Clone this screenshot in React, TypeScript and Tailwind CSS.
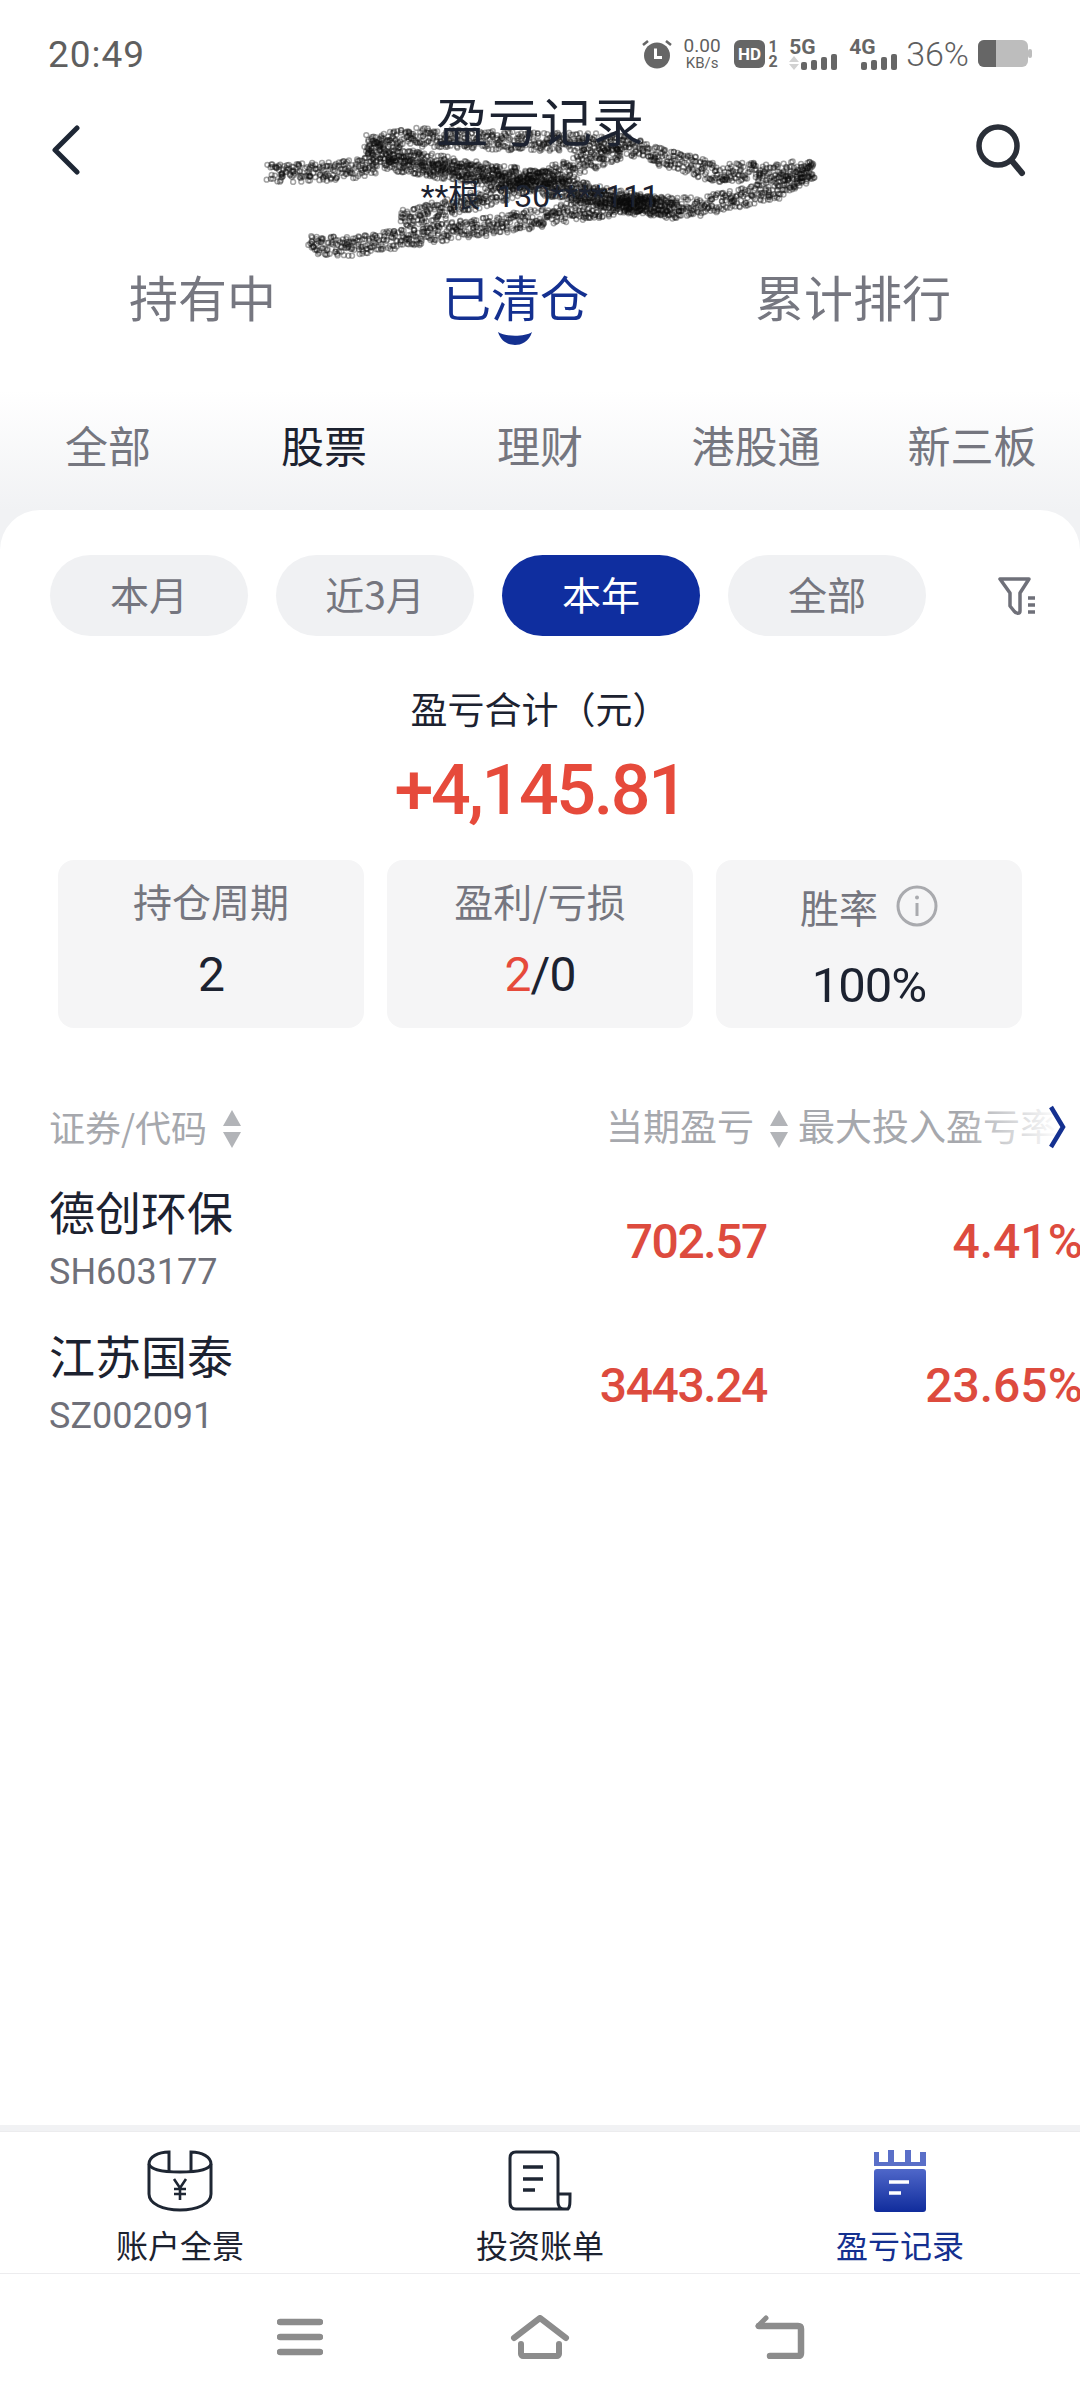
import React from "react";

const CJK = "font-['Noto_Sans_CJK_SC','Noto_Sans',sans-serif]";
const NUM = "font-['Roboto','Noto_Sans_CJK_SC',sans-serif]";

function buildScribble() {
  const strokes: number[][][] = [
    [[75, 250], [250, 245], [400, 215], [520, 240], [700, 270], [850, 300], [1000, 340], [1150, 360]],
    [[330, 165], [450, 140], [650, 150], [800, 155], [1000, 160], [1100, 200], [1250, 250], [1500, 240], [1400, 300], [1200, 350], [1000, 345]],
    [[330, 175], [440, 205], [600, 240], [800, 270], [950, 320], [1100, 350]],
    [[420, 390], [560, 350], [700, 300], [850, 240], [1000, 180]],
    [[180, 465], [300, 470], [500, 430], [700, 400], [900, 360], [1050, 340]],
  ];
  let seed = 12345;
  const rnd = () => {
    seed = (seed * 16807) % 2147483647;
    return seed / 2147483647;
  };
  const dots: { x: number; y: number }[] = [];
  for (const s of strokes) {
    for (let i = 0; i < s.length - 1; i++) {
      const x0 = 240 + s[i][0] / 2.613;
      const y0 = 90 + s[i][1] / 3;
      const x1 = 240 + s[i + 1][0] / 2.613;
      const y1 = 90 + s[i + 1][1] / 3;
      const len = Math.hypot(x1 - x0, y1 - y0);
      const n = Math.ceil(len / 0.55);
      for (let k = 0; k < n; k++) {
        const t = k / n;
        dots.push({
          x: x0 + (x1 - x0) * t + (rnd() - 0.5) * 5,
          y: y0 + (y1 - y0) * t + (rnd() - 0.5) * 19,
        });
      }
    }
  }
  return dots;
}
const scribble = buildScribble();

function Sort({ className = "" }: { className?: string }) {
  return (
    <svg width="22" height="38" viewBox="0 0 22 38" className={className}>
      <path d="M11 0 L20 16 H2 Z" fill="#b2b4b8" />
      <path d="M11 38 L20 22 H2 Z" fill="#b2b4b8" />
    </svg>
  );
}

function Bars() {
  return (
    <svg width="36" height="16" viewBox="0 0 36 16">
      <rect x="0" y="8" width="6" height="8" rx="2" fill="#666" />
      <rect x="10" y="6" width="6" height="10" rx="2" fill="#666" />
      <rect x="20" y="3" width="6" height="13" rx="2" fill="#666" />
      <rect x="30" y="0" width="6" height="16" rx="2" fill="#666" />
    </svg>
  );
}

function StatusBar() {
  return (
    <div className="h-[90px] pt-[18px] px-[48px] flex items-center justify-between text-[#5f5f5f] font-['Roboto',sans-serif]">
      <span className="text-[37px] tracking-[1px] leading-none">20:49</span>
      <div className="flex items-center">
        <svg width="32" height="30" viewBox="0 0 32 30">
          <circle cx="16" cy="16.5" r="13" fill="#666" />
          <path d="M14.5 9.5 V18.5 H21" stroke="#fff" strokeWidth="3" fill="none" />
          <path d="M2 6 L7 2 M30 6 L25 2" stroke="#666" strokeWidth="2.6" />
        </svg>
        <div className="ml-[8px] w-[42px] flex flex-col items-center">
          <span className="text-[19px] leading-[18px]">0.00</span>
          <span className="text-[15px] leading-[16px]">KB/s</span>
        </div>
        <div className="ml-[11px] w-[31px] h-[28px] rounded-[6px] bg-[#666] text-white text-[17px] font-bold flex items-center justify-center leading-none">
          HD
        </div>
        <div className="ml-[2px] w-[12px] flex flex-col items-center text-[16px] font-bold leading-[15px] text-[#666]">
          <span>1</span>
          <span>2</span>
        </div>
        <div className="ml-[10px] w-[48px] flex flex-col">
          <span className="text-[21px] font-bold leading-[16px] text-[#666]">5G</span>
          <div className="flex items-end justify-between mt-[-1px]">
            <svg width="10" height="14" viewBox="0 0 10 14">
              <path d="M5 0 L10 6 H0 Z M5 14 L10 8 H0 Z" fill="#d2d2d2" />
            </svg>
            <Bars />
          </div>
        </div>
        <div className="ml-[12px] w-[48px] flex flex-col">
          <span className="text-[21px] font-bold leading-[16px] text-[#666]">4G</span>
          <div className="flex justify-end mt-[-1px]">
            <Bars />
          </div>
        </div>
        <span className="ml-[9px] text-[34px] font-light leading-none">36%</span>
        <svg className="ml-[9px]" width="54" height="28" viewBox="0 0 54 28">
          <rect x="0" y="0" width="50" height="27" rx="6" fill="#bdbdbd" />
          <path d="M6 0 H18 V27 H6 A6 6 0 0 1 0 21 V6 A6 6 0 0 1 6 0 Z" fill="#666" />
          <rect x="50" y="9" width="4" height="9" rx="2" fill="#bdbdbd" />
        </svg>
      </div>
    </div>
  );
}

function Header() {
  return (
    <div className="relative h-[160px] flex justify-between pl-[50px] pr-[52px]">
      <div className="w-[56px]">
        <svg className="mt-[35px]" width="32" height="50" viewBox="0 0 32 50">
          <path d="M27 3 L5 25 L27 47" stroke="#1e2735" strokeWidth="5" fill="none" strokeLinecap="round" strokeLinejoin="round" />
        </svg>
      </div>
      <div className="flex flex-col items-center text-[#1c2230] relative z-10">
        <span className="text-[52px] leading-[60px]">盈亏记录</span>
        <span className={`${NUM} text-[32px] leading-[40px] mt-[26px] whitespace-nowrap`}>**根{"\u00a0\u00a0"}130****111</span>
      </div>
      <svg className="mt-[34px]" width="54" height="54" viewBox="0 0 54 54">
        <circle cx="24" cy="22" r="19" stroke="#2a2f38" strokeWidth="5.5" fill="none" />
        <path d="M38 37 L48 49" stroke="#2a2f38" strokeWidth="6" strokeLinecap="round" />
      </svg>
    </div>
  );
}

function MainTabs() {
  return (
    <div className="h-[94px] pb-[2px] px-[129px] flex justify-between items-center text-[49px] leading-[60px] text-[#767780]">
      <span>持有中</span>
      <span className="relative text-[#143090]">
        已清仓
        <svg className="absolute left-[55px] top-[65px]" width="36" height="15" viewBox="0 0 36 15">
          <path d="M1 1 C8 6 28 6 35 1 C32 11 24 14 18 14 C12 14 4 11 1 1 Z" fill="#143090" />
        </svg>
      </span>
      <span>累计排行</span>
    </div>
  );
}

function SubTabs() {
  const items = ["全部", "股票", "理财", "港股通", "新三板"];
  return (
    <div className="h-[166px] pt-[72px] grid grid-cols-5 items-start bg-linear-to-b from-white from-[28%] to-[#f1f2f4] text-[43px] leading-[56px] text-[#75767f] text-center">
      {items.map((t) => (
        <span key={t} className={t === "股票" ? "text-[#1c2230]" : ""}>
          {t}
        </span>
      ))}
    </div>
  );
}

function Pills() {
  const items = ["本月", "近3月", "本年", "全部"];
  return (
    <div className="flex items-center pl-[50px] gap-[28px]">
      {items.map((t) => (
        <div
          key={t}
          className={`w-[198px] h-[81px] pb-[4px] rounded-full flex items-center justify-center text-[39px] ${
            t === "本年" ? "bg-[#0f2e9f] text-white" : "bg-[#f0f1f3] text-[#75767f]"
          }`}
        >
          {t}
        </div>
      ))}
      <svg className="ml-[44px]" width="40" height="40" viewBox="0 0 40 40">
        <path
          d="M2 3 H31 L22 17 V35 C22 38 18 38 16 35 L12 30 V17 Z"
          stroke="#6f7079"
          strokeWidth="3.5"
          fill="none"
          strokeLinejoin="round"
        />
        <path d="M30 22 H37 M30 29 H37 M30 36 H37" stroke="#6f7079" strokeWidth="3.5" />
      </svg>
    </div>
  );
}

function Summary() {
  return (
    <div className="flex flex-col items-center">
      <span className="mt-[47px] text-[37px] leading-[50px] text-[#1c2230]">盈亏合计（元）</span>
      <span className={`${NUM} mt-[17px] text-[70px] leading-[80px] font-medium tracking-[-2.4px] text-[#e64a3b]`}>
        +4,145.81
      </span>
    </div>
  );
}

function Stats() {
  return (
    <div className="mt-[30px] mx-[58px] grid grid-cols-3 gap-[23px]">
      <div className="h-[168px] rounded-[16px] bg-[#f5f5f6] pt-[15px] flex flex-col items-center">
        <span className="text-[39px] leading-[50px] text-[#75767f]">持仓周期</span>
        <span className={`${NUM} mt-[20px] text-[48px] leading-[60px] tracking-[-1px] text-[#1c2230]`}>2</span>
      </div>
      <div className="h-[168px] rounded-[16px] bg-[#f5f5f6] pt-[15px] flex flex-col items-center">
        <span className="text-[39px] leading-[50px] text-[#75767f]">盈利/亏损</span>
        <span className={`${NUM} mt-[20px] text-[48px] leading-[60px] tracking-[-1px] text-[#1c2230]`}>
          <span className="text-[#e64a3b]">2</span>/0
        </span>
      </div>
      <div className="h-[168px] rounded-[16px] bg-[#f5f5f6] pt-[21px] flex flex-col items-center">
        <div className="flex items-center h-[50px]">
          <span className="text-[39px] leading-[50px] text-[#75767f]">胜率</span>
          <svg className="ml-[18px]" width="42" height="42" viewBox="0 0 42 42">
            <circle cx="21" cy="21" r="19" stroke="#a9aaae" strokeWidth="3" fill="none" />
            <circle cx="21" cy="12.5" r="2" fill="#a9aaae" />
            <path d="M21 18 V31" stroke="#a9aaae" strokeWidth="3" />
          </svg>
        </div>
        <span className={`${NUM} mt-[25px] text-[49px] leading-[60px] tracking-[-1px] text-[#1c2230]`}>100%</span>
      </div>
    </div>
  );
}

function Table() {
  const rows = [
    { n: "德创环保", c: "SH603177", v: "702.57", r: "4.41%" },
    { n: "江苏国泰", c: "SZ002091", v: "3443.24", r: "23.65%" },
  ];
  return (
    <div className="mt-[73px]">
      <div className="relative h-[50px] flex items-center text-[#a6a8ad] overflow-hidden">
        <div className="w-[590px] pl-[49px] flex items-center text-[36px]">
          <span>证券/代码</span>
          <Sort className="ml-[14px] mt-[6px]" />
        </div>
        <div className="w-[200px] flex items-center justify-end text-[37px]">
          <span>当期盈亏</span>
          <Sort className="ml-[14px] mt-[6px]" />
        </div>
        <span className="ml-[8px] text-[37px] whitespace-nowrap">最大投入盈亏率</span>
        <div className="absolute left-[960px] top-0 w-[100px] h-full bg-linear-to-r from-transparent to-white" />
        <svg className="absolute left-[1047px] top-[4px]" width="20" height="44" viewBox="0 0 20 44">
          <path d="M4 2 L16 22 L4 42" stroke="#143090" strokeWidth="4.5" fill="none" />
        </svg>
      </div>
      <div className="mt-[29px]">
        {rows.map((r) => (
          <div key={r.c} className="h-[144px] flex items-start overflow-hidden">
            <div className="w-[590px] pl-[49px] flex flex-col">
              <span className="text-[46px] leading-[60px] text-[#1c2230]">{r.n}</span>
              <span className={`${NUM} mt-[12px] text-[36px] leading-[40px] text-[#6f7079]`}>{r.c}</span>
            </div>
            <div className={`${NUM} w-[177px] mt-[32px] text-right text-[48px] leading-[60px] font-medium tracking-[-1.4px] text-[#dd4b3e]`}>
              {r.v}
            </div>
            <div className="flex-1 mt-[32px] flex justify-end">
              <span className={`${NUM} mr-[-3px] text-[48px] leading-[60px] font-medium text-[#dd4b3e]`}>
                {r.r}
              </span>
            </div>
          </div>
        ))}
      </div>
    </div>
  );
}

function BottomTabs() {
  return (
    <div className="h-[143px] mt-[6px] bg-white border-t border-b border-[#ececee] grid grid-cols-3 text-[32px] leading-[44px] text-[#1c2230]">
      <div className="flex flex-col items-center pt-[18px]">
        <svg width="66" height="62" viewBox="0 0 66 62" fill="none" stroke="#1e2633" strokeWidth="3">
          <path d="M2 14 V44 C2 54 16 60 33 60 C50 60 64 54 64 44 V14" />
          <path d="M2 14 C2 7 11 2 22 2 V21 M44 21 V2 C55 2 64 7 64 14" />
          <path d="M2 14 C3 19 14 22 33 22 C52 22 63 19 64 14" />
          <path d="M27 29 L33 38 L39 29 M33 38 V50 M27 39 H39 M27 44 H39" strokeWidth="2.6" />
        </svg>
        <span className="mt-[10px]">账户全景</span>
      </div>
      <div className="flex flex-col items-center pt-[18px]">
        <svg width="64" height="62" viewBox="0 0 64 62" fill="none" stroke="#1e2633" strokeWidth="3">
          <path d="M50 44 V8 C50 4 47 2 44 2 H8 C4 2 2 4 2 8 V52 C2 57 4 59 8 59 H60 C62 57 62 54 62 44 H50 V52 C50 56 52 59 56 59" />
          <path d="M15 17 H35 M15 29 H35 M15 40 H27" strokeWidth="3.6" />
        </svg>
        <span className="mt-[10px]">投资账单</span>
      </div>
      <div className="flex flex-col items-center pt-[16px] text-[#143090]">
        <svg width="52" height="64" viewBox="0 0 52 64">
          <path d="M0 4 H5 V14 H14 V2 H20 V14 H31 V2 H37 V14 H46 V4 H52 V18 H0 Z" fill="#5a6fc8" />
          <rect x="0" y="21" width="52" height="43" rx="3" fill="url(#g)" />
          <defs>
            <linearGradient id="g" x1="0" y1="0" x2="0" y2="1">
              <stop offset="0" stopColor="#4f67c9" />
              <stop offset="1" stopColor="#102c9c" />
            </linearGradient>
          </defs>
          <path d="M15 34 H35 M15 45 H27" stroke="#fff" strokeWidth="3.6" />
        </svg>
        <span className="mt-[10px]">盈亏记录</span>
      </div>
    </div>
  );
}

function NavBar() {
  return (
    <div className="h-[126px] bg-white flex justify-center items-center">
      <div className="w-[240px] flex justify-center">
        <svg width="46" height="38" viewBox="0 0 46 38" fill="none" stroke="#8c8c8c" strokeWidth="6.5" strokeLinecap="round">
          <path d="M3 4 H43 M3 19 H43 M3 34 H43" />
        </svg>
      </div>
      <div className="w-[240px] flex justify-center">
        <svg width="60" height="44" viewBox="0 0 60 44" fill="none" stroke="#8c8c8c" strokeWidth="6" strokeLinejoin="round" strokeLinecap="round">
          <path d="M4 23 L30 3 L56 23" />
          <path d="M11 29 V39 C11 40 12 41 13 41 H47 C48 41 49 40 49 39 V29" />
        </svg>
      </div>
      <div className="w-[240px] flex justify-center">
        <svg width="50" height="44" viewBox="0 0 50 44" fill="none" stroke="#8c8c8c" strokeWidth="6.5" strokeLinejoin="round" strokeLinecap="round">
          <path d="M4 11 H43 C45 11 46 12 46 14 V38 C46 40 45 41 43 41 H15" />
          <path d="M11 3 L3 11" strokeWidth="5" />
        </svg>
      </div>
    </div>
  );
}

export default function App() {
  return (
    <div className={`${CJK} relative w-[1080px] h-[2400px] bg-white overflow-hidden flex flex-col`}>
      <StatusBar />
      <Header />
      <MainTabs />
      <SubTabs />
      <div className="flex-1 flex flex-col bg-[#f1f2f4]">
        <div className="flex-1 bg-white rounded-t-[40px] pt-[45px]">
          <Pills />
          <Summary />
          <Stats />
          <Table />
        </div>
        <BottomTabs />
        <NavBar />
      </div>
      <svg className="absolute left-0 top-0 pointer-events-none" width="1080" height="300" viewBox="0 0 1080 300">
        {scribble.map((d, i) => (
          <circle key={i} cx={d.x} cy={d.y} r="2.4" fill="none" stroke="#0d0d0d" strokeOpacity="0.38" strokeWidth="1.5" />
        ))}
      </svg>
    </div>
  );
}
